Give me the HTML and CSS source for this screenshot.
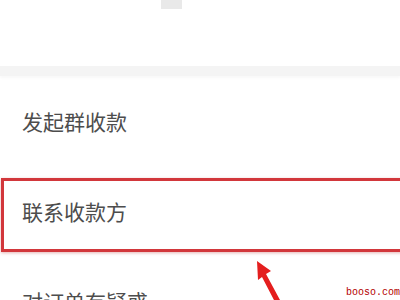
FILE: index.html
```html
<!DOCTYPE html>
<html lang="zh">
<head>
<meta charset="utf-8">
<link rel="stylesheet" href="styles.css">
</head>
<body>
<div class="page">
  <div class="top"><div class="handle"></div></div>
  <div class="band"></div>
  <div class="list">
    <div class="row">发起群收款</div>
    <div class="row">联系收款方</div>
    <div class="row">对订单有疑惑</div>
  </div>
  <div class="highlight"></div>
  <svg class="arrow" width="60" height="60" viewBox="0 0 60 60">
    <polygon points="17,11 31,21 26,24 40,50 35,52 22,27 18,30" fill="#e41e1e"/>
  </svg>
  <div class="watermark">booso.com</div>
</div>
</body>
</html>
```
FILE: styles.css
```css
html, body {
  margin: 0;
  padding: 0;
  background: #fff;
}
.page {
  position: relative;
  width: 400px;
  height: 300px;
  overflow: hidden;
  font-family: "Noto Sans CJK SC", "Noto Sans", sans-serif;
}
.top {
  height: 66px;
}
.handle {
  margin-left: 161px;
  width: 21px;
  height: 9px;
  background: #e9e9e9;
}
.band {
  height: 10px;
  background: #f4f4f4;
  box-shadow: 0 2px 3px rgba(0,0,0,0.03);
}
.list {
  display: flex;
  flex-direction: column;
}
.row {
  height: 90px;
  display: flex;
  align-items: center;
  padding-left: 22px;
  font-size: 21px;
  color: #4d4d4d;
  letter-spacing: 0;
}
.highlight {
  position: absolute;
  left: 1px;
  top: 178px;
  width: 420px;
  height: 68px;
  border: 3px solid #d2373b;
  box-shadow: 0 1px 3px rgba(180,40,40,0.35);
}
.arrow {
  position: absolute;
  left: 240px;
  top: 250px;
}
.watermark {
  position: absolute;
  right: 0;
  top: 287px;
  font-family: "Liberation Mono", monospace;
  font-size: 10px;
  line-height: 12px;
  color: #b30000;
}
```
